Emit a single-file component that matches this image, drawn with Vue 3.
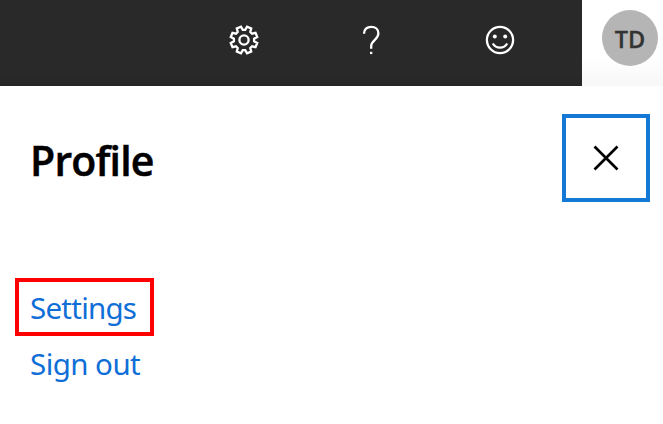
<script setup>
const gearPoints = []
for (let i = 0; i < 8; i++) {
  for (const [offset, radius] of [[-15.5, 10.2], [-9.5, 13.6], [9.5, 13.6], [15.5, 10.2]]) {
    const angle = ((i * 45 + 22.5 + offset) * Math.PI) / 180
    gearPoints.push(`${(16 + radius * Math.cos(angle)).toFixed(2)},${(16 + radius * Math.sin(angle)).toFixed(2)}`)
  }
}
const gear = gearPoints.join(' ')
</script>

<template>
  <div class="page">
    <header class="topbar">
      <nav class="tools">
        <button class="tool" aria-label="Settings">
          <svg width="32" height="32" viewBox="0 0 32 32">
            <polygon :points="gear" />
            <circle cx="16" cy="16" r="4.6" />
          </svg>
        </button>
        <button class="tool" aria-label="Help">
          <svg width="32" height="32" viewBox="0 0 32 32">
            <path d="M8 9.8C8 5.5 10.8 2.8 15.2 2.8c4.3 0 7.2 2.5 7.2 6.5 0 6.6-7.2 6.8-7.2 12.7v2.8" />
            <rect class="solid" x="14" y="27.8" width="2.3" height="2.3" />
          </svg>
        </button>
        <button class="tool" aria-label="Feedback">
          <svg width="32" height="32" viewBox="0 0 32 32">
            <circle cx="16" cy="16" r="13.1" />
            <circle class="solid" cx="10.8" cy="12.6" r="2" />
            <circle class="solid" cx="21.2" cy="12.6" r="2" />
            <path d="M8.8 19.5c3.2 5.5 11.2 5.5 14.4 0" />
          </svg>
        </button>
      </nav>
      <div class="account">
        <div class="avatar">TD</div>
      </div>
    </header>
    <main class="panel">
      <div class="heading">
        <h1>Profile</h1>
        <button class="close" aria-label="Close">
          <svg width="28" height="28" viewBox="0 0 28 28">
            <path d="M2.5 2.5l23 23M25.5 2.5l-23 23" />
          </svg>
        </button>
      </div>
      <div class="links">
        <a class="link selected"><span class="settings">Settings</span></a>
        <a class="link"><span class="signout">Sign out</span></a>
      </div>
    </main>
  </div>
</template>

<style>
body {
  background: #fff;
  overflow: hidden;
}
</style>

<style scoped>
.page {
  width: 663px;
  height: 424px;
  background: #fff;
  font-family: "Noto Sans", "Open Sans", sans-serif;
}
button {
  padding: 0;
  border: 0;
  background: none;
}
svg {
  display: block;
  fill: none;
}
.topbar {
  display: flex;
  height: 86px;
}
.tools {
  display: flex;
  box-sizing: border-box;
  width: 582px;
  padding-left: 180px;
  background: linear-gradient(#292929 75px, #262626);
}
.tool {
  display: flex;
  justify-content: center;
  width: 128px;
  padding-top: 24px;
}
.tool svg {
  stroke: #fff;
  stroke-width: 2.3;
}
.tool .solid {
  fill: #fff;
  stroke: none;
}
.account {
  box-sizing: border-box;
  width: 81px;
  padding: 10px 0 0 20px;
  background: linear-gradient(#fff 58px, #f7f7f7);
}
.avatar {
  width: 56px;
  height: 56px;
  border-radius: 50%;
  background: #b5b5b5;
  color: #333;
  font-family: "Open Sans", sans-serif;
  font-size: 23.5px;
  font-weight: 600;
  line-height: 58px;
  text-align: center;
  -webkit-text-stroke: 0.3px #333;
}
.panel {
  padding: 28px 13px 0 15px;
}
.heading {
  display: flex;
  justify-content: space-between;
  height: 88px;
}
h1 {
  margin: 0;
  padding-left: 15px;
  color: #000;
  font-family: "Open Sans", sans-serif;
  font-size: 41px;
  font-weight: 600;
  line-height: 92px;
  letter-spacing: -0.8px;
  -webkit-text-stroke: 0.5px #000;
}
.close {
  display: flex;
  align-items: center;
  justify-content: center;
  box-sizing: border-box;
  width: 88px;
  height: 88px;
  border: 4px solid #1479d4;
}
.close svg {
  stroke: #000;
  stroke-width: 2.7;
}
.links {
  display: flex;
  flex-direction: column;
  align-items: flex-start;
  padding-top: 76px;
}
.link {
  box-sizing: border-box;
  height: 58px;
  padding: 0 11px;
  border: 4px solid transparent;
  color: #106ed7;
  font-size: 29.5px;
  line-height: 52px;
  white-space: nowrap;
}
.link + .link {
  margin-top: -2px;
}
.selected {
  width: 139px;
  border-color: #f00;
}
.settings {
  letter-spacing: -0.75px;
}
.signout {
  letter-spacing: -0.55px;
}
</style>
